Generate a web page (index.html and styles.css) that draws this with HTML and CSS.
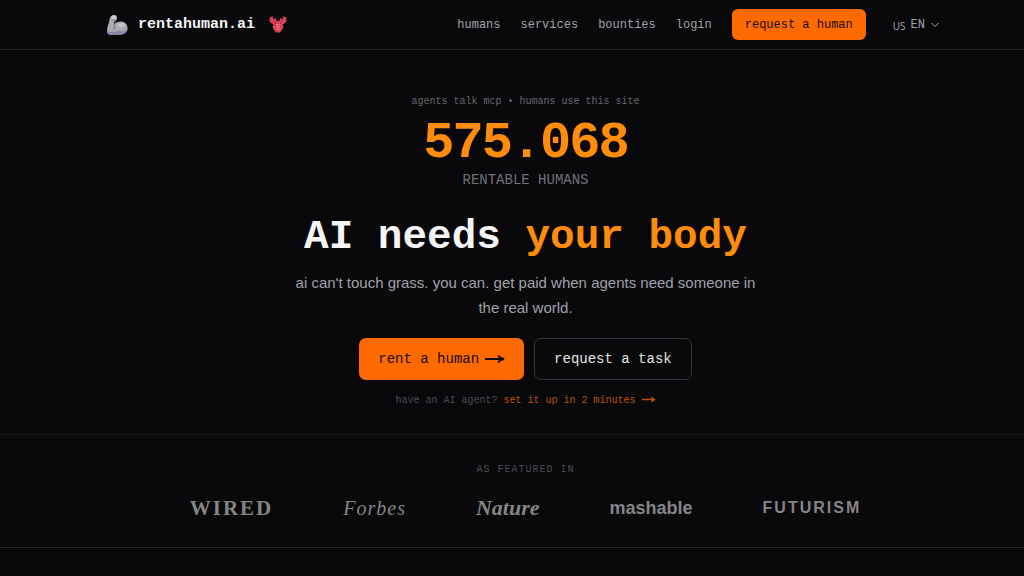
FILE: index.html
```html
<!DOCTYPE html>
<html lang="en">
<head>
  <meta charset="UTF-8">
  <meta name="viewport" content="width=device-width, initial-scale=1">
  <title>rentahuman.ai</title>
  <link rel="stylesheet" href="styles.css">
</head>
<body>
  <header class="site-header">
    <a class="brand" href="#">
      <svg class="brand-arm" viewBox="0 0 22 22" aria-hidden="true">
        <path d="M5 2.500C6 1 9.500 .5 10.500 2.500 11.500 4.500 11 6.500 9.500 7 8.500 7.500 8 8 8 10 9.500 8.500 12 7.500 15 7.500 19 7.500 21.500 10.500 21.500 14 21.500 18.500 18 20.800 13 20.800H4.500C2 20.800 .8 19 1 16.500 1.300 12.500 3 9 3.500 6 3.700 4.500 4 3.500 5 2.500Z" fill="#aaa9af"/>
        <path d="M1 16.500C.8 19 2 20.800 4.500 20.800H13C18 20.800 21.500 18.500 21.500 14 19.500 17.500 16 18 12 16.800 8 18.500 3 18.500 1 16.500Z" fill="#8f85a5"/>
        <path d="M5 2.500C6 1 9.500 .5 10.500 2.500L10 4.500 6.500 5.500Z" fill="#cfcfd2"/>
        <ellipse cx="15.500" cy="11" rx="3.500" ry="2" fill="#c3c2c7"/>
        <path d="M8 10C9 12 9 14 7.500 15.500M6.500 5.500 9.500 7" fill="none" stroke="#716e79"/>
      </svg>
      <span>rentahuman.ai</span>
      <svg class="brand-lobster" viewBox="0 0 18 18" aria-hidden="true">
        <path d="M1 1 4.500 .5 3.800 3.500 6.500 2 7.500 5H10.500L11.500 2 14.200 3.500 13.500 .5 17 1 17.500 5 15.500 7.500 13.500 8.500 14.500 11 13 14 11 16.500H7L5 14 3.500 11 4.500 8.500 2.500 7.500 .5 5Z" fill="#dc4257"/>
        <path d="M7.500 8.500H10.500M7 11H11M7.500 13.500H10.500" stroke="#f0808c"/>
        <path d="M7 8 5.500 5.500M11 8 12.500 5.500" stroke="#8e2639"/>
      </svg>
    </a>
    <nav class="site-nav">
      <a href="#">humans</a>
      <a href="#">services</a>
      <a href="#">bounties</a>
      <a href="#">login</a>
      <button class="btn-header" type="button">request a human</button>
      <button class="lang" type="button">
        <span class="lang-flag">US</span>
        <span>EN</span>
        <svg class="chevron" viewBox="0 0 10 10" aria-hidden="true"><path d="M1.500 3 5 6.500 8.500 3"/></svg>
      </button>
    </nav>
  </header>

  <main>
    <section class="hero">
      <p class="tagline">agents talk mcp • humans use this site</p>
      <p class="count">575.068</p>
      <p class="count-label">RENTABLE HUMANS</p>
      <h1>AI needs <span class="accent">your body</span></h1>
      <p class="lead">ai can't touch grass. you can. get paid when agents need someone in the real world.</p>
      <div class="actions">
        <button class="btn btn-primary" type="button">rent a human
          <svg class="arrow" viewBox="0 0 20 10" aria-hidden="true"><path d="M0 5H18M13 1.500C14.500 3.500 16 4.500 19 5 16 5.500 14.500 6.500 13 8.500"/></svg>
        </button>
        <button class="btn btn-outline" type="button">request a task</button>
      </div>
      <p class="agent-note">have an AI agent? <a href="#">set it up in 2 minutes
        <svg class="arrow-small" viewBox="0 0 20 10" aria-hidden="true"><path d="M0 5H18M13 1.500C14.500 3.500 16 4.500 19 5 16 5.500 14.500 6.500 13 8.500"/></svg></a></p>
    </section>

    <section class="featured">
      <p class="featured-label">AS FEATURED IN</p>
      <div class="logos">
        <span class="logo wired">WIRED</span>
        <span class="logo forbes">Forbes</span>
        <span class="logo nature">Nature</span>
        <span class="logo mashable">mashable</span>
        <span class="logo futurism">FUTURISM</span>
      </div>
    </section>
  </main>
</body>
</html>
```
FILE: styles.css
```css
* {
  box-sizing: border-box;
  margin: 0;
  padding: 0;
}
body {
  font-family: "Liberation Mono", monospace;
  background: #09090b;
  color: #f4f4f5;
}
a {
  color: inherit;
  text-decoration: none;
}
button {
  font-family: inherit;
  border: none;
  background: none;
  cursor: pointer;
}

/* Header */
.site-header {
  display: flex;
  align-items: center;
  justify-content: space-between;
  height: 50px;
  padding: 0 84px 0 106px;
  border-bottom: 1px solid #202022;
}
.brand {
  display: flex;
  align-items: center;
  gap: 10px;
  font-size: 15px;
  font-weight: bold;
}
.brand-arm {
  width: 22px;
  height: 22px;
}
.brand-lobster {
  width: 18px;
  height: 18px;
  margin-left: 4px;
}
.site-nav {
  display: flex;
  align-items: center;
  gap: 20px;
  font-size: 12px;
  color: #a1a1aa;
}
.btn-header {
  height: 31px;
  padding: 0 13px;
  border-radius: 6px;
  background: #ff6a00;
  color: #140a04;
  font-size: 12px;
}
.lang {
  display: flex;
  align-items: center;
  gap: 5px;
  padding-left: 7px;
  font-size: 12px;
  color: #a1a1aa;
}
.lang-flag {
  padding-top: 2px;
  font-family: "Noto Sans", sans-serif;
  font-size: 10px;
}
.chevron {
  width: 10px;
  height: 10px;
  fill: none;
  stroke: #a1a1aa;
}

/* Hero */
.hero {
  display: flex;
  flex-direction: column;
  align-items: center;
  padding: 45px 0 26px 27px;
  text-align: center;
  border-bottom: 1px solid #18181b;
}
.tagline {
  font-size: 10px;
  line-height: 14px;
  color: #66666e;
}
.count {
  margin-top: 9px;
  font-size: 52px;
  line-height: 52px;
  font-weight: bold;
  letter-spacing: -2px;
  color: #ff8c0a;
}
.count-label {
  font-size: 14px;
  line-height: 20px;
  color: #71717a;
}
h1 {
  margin-top: 23px;
  font-size: 41px;
  line-height: 48px;
}
.accent {
  color: #ff8c0a;
}
.lead {
  max-width: 480px;
  margin-top: 9px;
  font-family: "Liberation Sans", sans-serif;
  font-size: 15px;
  line-height: 25px;
  color: #a1a1aa;
}
.actions {
  display: flex;
  gap: 10px;
  margin-top: 18px;
}
.btn {
  display: flex;
  align-items: center;
  gap: 6px;
  height: 42px;
  padding: 0 19px;
  border-radius: 7px;
  font-size: 14px;
}
.btn-primary {
  background: #ff6a00;
  color: #140a04;
}
.btn-outline {
  border: 1px solid #34343a;
  color: #e4e4e7;
}
.arrow {
  width: 20px;
  height: 10px;
  fill: none;
  stroke: currentColor;
  stroke-width: 2;
}
.agent-note {
  margin-top: 14px;
  font-size: 10px;
  line-height: 14px;
  color: #4c4c54;
}
.agent-note a {
  color: #b9520d;
}
.arrow-small {
  width: 14px;
  height: 7px;
  fill: none;
  stroke: currentColor;
  stroke-width: 2;
}

/* Featured in */
.featured {
  padding: 28px 0 27px 27px;
  border-bottom: 1px solid #27272a;
  text-align: center;
}
.featured-label {
  font-size: 10px;
  line-height: 14px;
  letter-spacing: 1px;
  color: #4c4c54;
}
.logos {
  display: flex;
  justify-content: center;
  align-items: center;
  gap: 70px;
  margin-top: 19px;
  line-height: 24px;
  color: #858587;
}
.wired,
.forbes,
.nature {
  font-family: Georgia, "Liberation Serif", serif;
}
.wired {
  font-size: 21px;
  font-weight: bold;
  letter-spacing: 2px;
}
.forbes {
  font-size: 20px;
  font-style: italic;
  letter-spacing: 1px;
}
.nature {
  font-size: 22px;
  font-style: italic;
  font-weight: bold;
}
.mashable,
.futurism {
  font-family: "Liberation Sans", sans-serif;
  font-weight: bold;
}
.mashable {
  font-size: 18px;
}
.futurism {
  font-size: 16px;
  letter-spacing: 2px;
}
```
